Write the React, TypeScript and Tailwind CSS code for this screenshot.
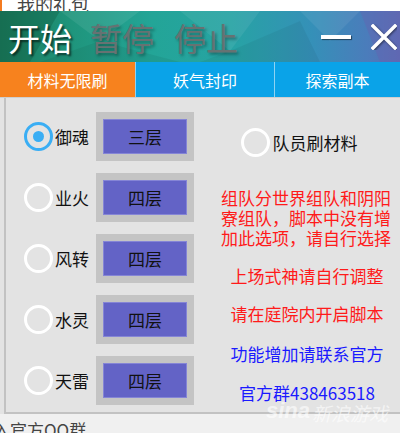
import React from "react";

const cjk = { fontFamily: '"Noto Sans CJK SC", "Noto Sans", sans-serif' };

function Radio({ checked }: { checked?: boolean }) {
  return checked ? (
    <div className="w-[29px] h-[29px] rounded-full border-[3px] border-[#3aaef4] flex items-center justify-center shrink-0">
      <div className="w-[11px] h-[11px] rounded-full bg-[#3aaef4]" />
    </div>
  ) : (
    <div className="w-[29px] h-[29px] rounded-full border-[3px] border-white shrink-0" />
  );
}

function Row({ label, level, checked }: { label: string; level: string; checked?: boolean }) {
  return (
    <div className="h-[61px] flex items-center">
      <div className="ml-[18px]">
        <Radio checked={checked} />
      </div>
      <div className="ml-[2px] text-[17px] text-[#111] leading-none w-[41px]">{label}</div>
      <div className="w-[98px] h-[49px] bg-[#c4c4c4] p-[7px]">
        <div className="w-full h-full bg-[#6363c6] border border-[#8585d6] flex items-center justify-center text-[17px] text-[#111] leading-none">
          {level}
        </div>
      </div>
    </div>
  );
}

export default function App() {
  return (
    <div className="w-[400px] h-[433px] overflow-hidden relative bg-[#f0f0f0]" style={cjk}>
      {/* top strip */}
      <div className="h-[11px] bg-white relative overflow-hidden flex">
        <div className="w-[2px] h-full bg-[#f47b20]" />
        <div className="ml-[15px] -mt-[7px] text-[18px] leading-[22px] text-[#444]">我的礼包</div>
      </div>
      {/* header */}
      <div
        className="h-[51px] relative overflow-hidden flex items-center"
        style={{
          background:
            "linear-gradient(90deg, #1b7a5c 0%, #1f957c 18%, #23a597 38%, #27a3a4 58%, #3590b8 78%, #4b7cbb 92%, #5a6db4 100%)",
        }}
      >
        <svg className="absolute inset-0" width="400" height="51" viewBox="0 0 400 51">
          <polygon points="0,0 60,0 30,51 0,51" fill="#0d5a40" opacity="0.35" />
          <polygon points="60,0 140,0 100,30" fill="#ffffff" opacity="0.08" />
          <polygon points="100,30 180,51 40,51" fill="#000000" opacity="0.06" />
          <polygon points="180,0 260,0 230,40" fill="#ffffff" opacity="0.07" />
          <polygon points="230,40 300,10 320,51 200,51" fill="#000000" opacity="0.05" />
          <polygon points="300,0 360,0 330,30" fill="#ffffff" opacity="0.07" />
          <polygon points="360,0 400,0 400,51 380,51" fill="#6a5fb0" opacity="0.35" />
        </svg>
        <div className="relative flex items-center ml-[8px] gap-[18px] text-[32px] leading-none">
          <span className="text-white" style={{ textShadow: "2px 2px 2px rgba(0,0,0,0.6)" }}>开始</span>
          <span className="text-[#667272]" style={{ textShadow: "2px 2px 3px rgba(0,0,0,0.35)" }}>暂停</span>
          <span className="text-[#667272] ml-[2px]" style={{ textShadow: "2px 2px 3px rgba(0,0,0,0.35)" }}>停止</span>
        </div>
        <div className="relative ml-auto flex items-center mr-[3px]">
          <div className="w-[30px] h-[4px] bg-white shadow-[1px_1px_1px_rgba(0,0,0,0.5)]" />
          <svg className="ml-[20px]" width="26" height="26" viewBox="0 0 26 26">
            <g style={{ filter: "drop-shadow(1px 1px 1px rgba(0,0,0,0.5))" }}>
              <path d="M2 2 L24 24 M24 2 L2 24" stroke="#ffffff" strokeWidth="3.5" strokeLinecap="square" />
            </g>
          </svg>
        </div>
      </div>
      {/* tabs */}
      <div className="h-[35px] flex text-white text-[16px] leading-none">
        <div className="w-[135px] bg-[#f7821e] flex items-center justify-center">材料无限刷</div>
        <div className="w-px bg-[#8fd3f2]" />
        <div className="w-[138px] bg-[#0aa3e8] flex items-center justify-center">妖气封印</div>
        <div className="w-px bg-[#8fd3f2]" />
        <div className="flex-1 bg-[#0aa3e8] flex items-center justify-center">探索副本</div>
      </div>
      <div className="h-px bg-[#cfcfcf]" />
      {/* panel */}
      <div className="bg-[#e3e3e3] pl-[4px]">
        <div className="h-[316px] border-l-2 border-b-2 border-[#c2c2c2] flex">
          <div className="w-[194px] pt-[8px]">
            <Row label="御魂" level="三层" checked />
            <Row label="业火" level="四层" />
            <Row label="风转" level="四层" />
            <Row label="水灵" level="四层" />
            <Row label="天雷" level="四层" />
          </div>
          <div className="flex-1 flex flex-col items-center pl-[12px] pt-[30px] text-[17px] leading-[20px] text-center">
            <div className="flex items-center -ml-[14px]">
              <Radio />
              <span className="ml-[3px] text-[#111] leading-none">队员刷材料</span>
            </div>
            <div className="mt-[31px] text-[#ff1a1a] whitespace-nowrap">
              组队分世界组队和阴阳
              <br />
              寮组队，脚本中没有增
              <br />
              加此选项，请自行选择
            </div>
            <div className="mt-[18px] text-[#ff1a1a] ml-[2px]">上场式神请自行调整</div>
            <div className="mt-[18px] text-[#ff1a1a] ml-[2px]">请在庭院内开启脚本</div>
            <div className="mt-[20px] text-[#1a1aff] ml-[2px]">功能增加请联系官方</div>
            <div className="mt-[19px] text-[#1a1aff] ml-[2px]">官方群438463518</div>
          </div>
        </div>
      </div>
      {/* bottom strip */}
      <div className="h-[19px] overflow-hidden">
        <div className="-ml-[24px] mt-[6px] text-[17px] leading-[20px] text-[#444] whitespace-nowrap">加入官方QQ群</div>
      </div>
      {/* watermark */}
      <div
        className="absolute left-[266px] top-[400px] text-white/60 italic font-bold text-[20px] leading-none flex items-end"
        style={{ fontFamily: '"Liberation Sans", "Noto Sans CJK SC", sans-serif' }}
      >
        <span className="text-[22px]">sina</span>
        <span className="ml-[2px] text-[19px] font-normal" style={cjk}>新浪游戏</span>
      </div>
    </div>
  );
}
